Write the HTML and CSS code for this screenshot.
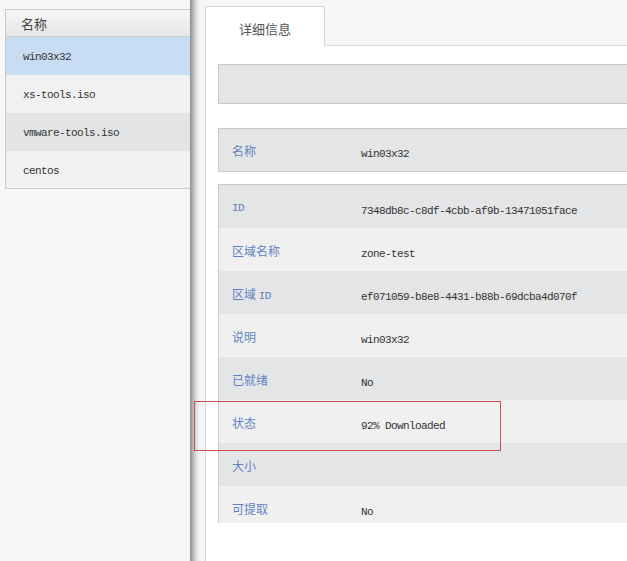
FILE: index.html
```html
<!DOCTYPE html>
<html lang="zh">
<head>
<meta charset="utf-8">
<link rel="stylesheet" href="styles.css">
</head>
<body>
<div class="page">
  <div class="left">
    <div class="list">
      <div class="list-head">名称</div>
      <div class="list-row selected">win03x32</div>
      <div class="list-row light">xs-tools.iso</div>
      <div class="list-row dark">vmware-tools.iso</div>
      <div class="list-row light">centos</div>
    </div>
  </div>
  <div class="right">
    <div class="tabs">
      <div class="tab">详细信息</div>
      <div class="tab-fill"></div>
    </div>
    <div class="content">
      <div class="box empty"></div>
      <div class="box single">
        <div class="row dark"><span class="label">名称</span><span class="value">win03x32</span></div>
      </div>
      <div class="box multi">
        <div class="row dark first"><span class="label mono-label">ID</span><span class="value">7348db8c-c8df-4cbb-af9b-13471051face</span></div>
        <div class="row light"><span class="label">区域名称</span><span class="value">zone-test</span></div>
        <div class="row dark"><span class="label">区域 <span class="mono-label">ID</span></span><span class="value">ef071059-b8e8-4431-b88b-69dcba4d070f</span></div>
        <div class="row light"><span class="label">说明</span><span class="value">win03x32</span></div>
        <div class="row dark"><span class="label">已就绪</span><span class="value">No</span></div>
        <div class="row light"><span class="label">状态</span><span class="value">92% Downloaded</span></div>
        <div class="row dark"><span class="label">大小</span><span class="value"></span></div>
        <div class="row light last"><span class="label">可提取</span><span class="value">No</span></div>
      </div>
    </div>
  </div>
</div>
<div class="highlight"></div>
</body>
</html>
```
FILE: styles.css
```css
html, body {
  margin: 0;
  padding: 0;
  width: 627px;
  height: 561px;
  overflow: hidden;
  background: #f7f7f7;
  font-family: "Noto Sans CJK SC", "Noto Sans", sans-serif;
}
.page {
  display: flex;
  height: 561px;
}
.left {
  width: 190px;
  flex: none;
  padding: 9px 0 0 5px;
  box-sizing: border-box;
  background: #f7f7f7;
}
.list {
  border: 1px solid #cbcbcb;
  border-right: none;
}
.list-head {
  height: 26px;
  line-height: 28px;
  padding-left: 15px;
  font-size: 13px;
  color: #444;
  background: linear-gradient(#f6f6f6, #e6e6e6);
  border-bottom: 1px solid #cbcbcb;
}
.list-row {
  height: 38px;
  line-height: 41px;
  padding-left: 17px;
  font-family: "Liberation Mono", monospace;
  font-size: 11px;
  letter-spacing: -0.6px;
  color: #333;
}
.list-row.selected { background: #c8dcf3; }
.list-row.light { background: #f2f1f1; }
.list-row.dark { background: #e3e4e5; }
.list-row:last-child { height: 37px; line-height: 40px; }

.right {
  flex: 1;
  display: flex;
  flex-direction: column;
  padding: 6px 0 0 15px;
  background: linear-gradient(to right, #8c8c8c 0, #a9a9a9 2px, #cfcfcf 5px, #ebebeb 8px, #f6f6f6 10px);
  min-width: 0;
}
.tabs {
  display: flex;
  height: 40px;
  flex: none;
}
.tab {
  width: 120px;
  height: 40px;
  box-sizing: border-box;
  border: 1px solid #d6d6d6;
  border-bottom: none;
  border-radius: 3px 3px 0 0;
  background: #fff;
  text-align: center;
  line-height: 44px;
  font-size: 13px;
  color: #555;
}
.tab-fill {
  flex: 1;
  border-bottom: 1px solid #dcdcdc;
}
.content {
  flex: 1;
  background: #fff;
  border-left: 1px solid #d6d6d6;
  padding: 18px 0 0 12px;
  display: flex;
  flex-direction: column;
}
.box {
  margin-right: -10px;
  background: #e4e5e6;
  border: 1px solid #cacaca;
}
.box.empty {
  height: 38px;
}
.box.single {
  margin-top: 24px;
}
.box.multi {
  margin-top: 12px;
  border-bottom: none;
  border-right: none;
}
.row {
  display: flex;
  align-items: flex-start;
  height: 43px;
  box-sizing: border-box;
  padding-top: 15px;
}
.box.single .row { height: 42px; padding-top: 14px; }
.row.first { height: 43px; }
.row.last { height: 37px; }
.row.dark { background: #e4e5e6; }
.row.light { background: #f1f0f0; }
.label {
  width: 129px;
  padding-left: 13px;
  flex: none;
  font-size: 12px;
  line-height: 16px;
  color: #5f83c2;
}
.mono-label {
  font-family: "Liberation Mono", monospace;
  font-size: 11px;
  letter-spacing: -0.6px;
}
.value {
  padding-top: 3px;
  font-family: "Liberation Mono", monospace;
  font-size: 11px;
  letter-spacing: -0.6px;
  line-height: 16px;
  color: #333;
}
.highlight {
  position: absolute;
  left: 194px;
  top: 401px;
  width: 305px;
  height: 48px;
  border: 1px solid #cc4f4f;
  pointer-events: none;
}
```
